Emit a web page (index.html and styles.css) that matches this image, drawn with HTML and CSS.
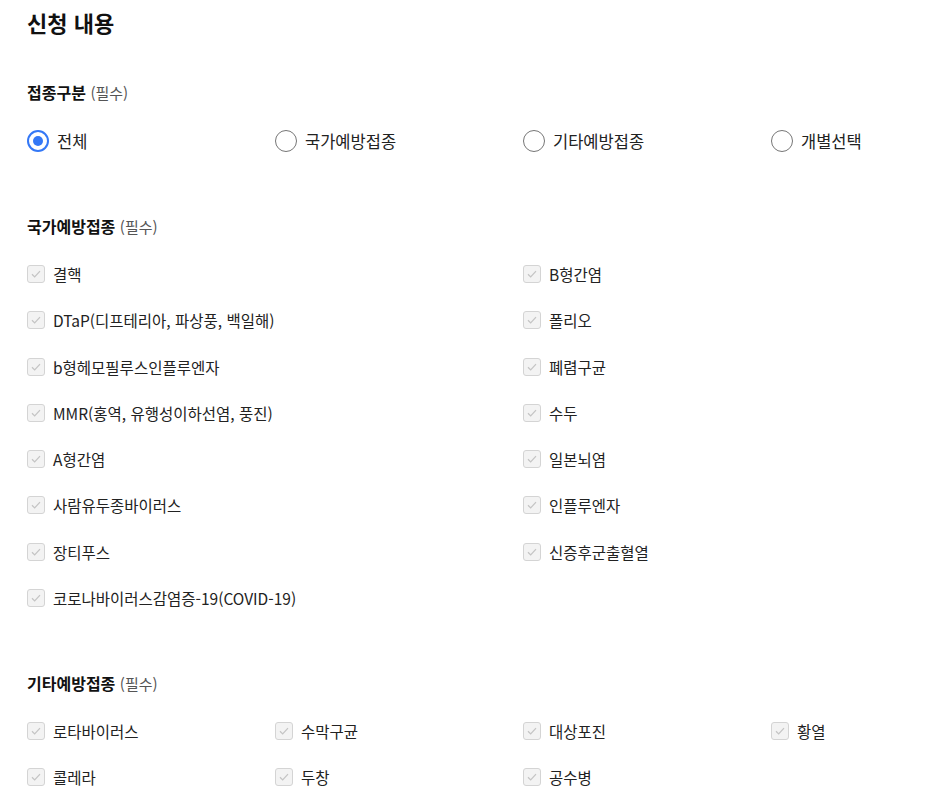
FILE: index.html
```html
<!DOCTYPE html>
<html lang="ko">
<head>
<meta charset="utf-8">
<link rel="stylesheet" href="styles.css">
</head>
<body>
<main class="page">
  <h1 class="title">신청 내용</h1>

  <section class="section first">
    <h2 class="label">접종구분 <span class="req">(필수)</span></h2>
    <div class="grid4">
      <label class="radio"><span class="dot checked"></span>전체</label>
      <label class="radio"><span class="dot"></span>국가예방접종</label>
      <label class="radio"><span class="dot"></span>기타예방접종</label>
      <label class="radio"><span class="dot"></span>개별선택</label>
    </div>
  </section>

  <section class="section">
    <h2 class="label">국가예방접종 <span class="req">(필수)</span></h2>
    <div class="grid2">
      <label class="check"><span class="box"><svg viewBox="0 0 18 18"><path d="M4.5 9.3l3 3 6-6.5"/></svg></span>결핵</label>
      <label class="check"><span class="box"><svg viewBox="0 0 18 18"><path d="M4.5 9.3l3 3 6-6.5"/></svg></span>B형간염</label>
      <label class="check"><span class="box"><svg viewBox="0 0 18 18"><path d="M4.5 9.3l3 3 6-6.5"/></svg></span>DTaP(디프테리아, 파상풍, 백일해)</label>
      <label class="check"><span class="box"><svg viewBox="0 0 18 18"><path d="M4.5 9.3l3 3 6-6.5"/></svg></span>폴리오</label>
      <label class="check"><span class="box"><svg viewBox="0 0 18 18"><path d="M4.5 9.3l3 3 6-6.5"/></svg></span>b형헤모필루스인플루엔자</label>
      <label class="check"><span class="box"><svg viewBox="0 0 18 18"><path d="M4.5 9.3l3 3 6-6.5"/></svg></span>폐렴구균</label>
      <label class="check"><span class="box"><svg viewBox="0 0 18 18"><path d="M4.5 9.3l3 3 6-6.5"/></svg></span>MMR(홍역, 유행성이하선염, 풍진)</label>
      <label class="check"><span class="box"><svg viewBox="0 0 18 18"><path d="M4.5 9.3l3 3 6-6.5"/></svg></span>수두</label>
      <label class="check"><span class="box"><svg viewBox="0 0 18 18"><path d="M4.5 9.3l3 3 6-6.5"/></svg></span>A형간염</label>
      <label class="check"><span class="box"><svg viewBox="0 0 18 18"><path d="M4.5 9.3l3 3 6-6.5"/></svg></span>일본뇌염</label>
      <label class="check"><span class="box"><svg viewBox="0 0 18 18"><path d="M4.5 9.3l3 3 6-6.5"/></svg></span>사람유두종바이러스</label>
      <label class="check"><span class="box"><svg viewBox="0 0 18 18"><path d="M4.5 9.3l3 3 6-6.5"/></svg></span>인플루엔자</label>
      <label class="check"><span class="box"><svg viewBox="0 0 18 18"><path d="M4.5 9.3l3 3 6-6.5"/></svg></span>장티푸스</label>
      <label class="check"><span class="box"><svg viewBox="0 0 18 18"><path d="M4.5 9.3l3 3 6-6.5"/></svg></span>신증후군출혈열</label>
      <label class="check"><span class="box"><svg viewBox="0 0 18 18"><path d="M4.5 9.3l3 3 6-6.5"/></svg></span>코로나바이러스감염증-19(COVID-19)</label>
    </div>
  </section>

  <section class="section">
    <h2 class="label">기타예방접종 <span class="req">(필수)</span></h2>
    <div class="grid4 checks">
      <label class="check"><span class="box"><svg viewBox="0 0 18 18"><path d="M4.5 9.3l3 3 6-6.5"/></svg></span>로타바이러스</label>
      <label class="check"><span class="box"><svg viewBox="0 0 18 18"><path d="M4.5 9.3l3 3 6-6.5"/></svg></span>수막구균</label>
      <label class="check"><span class="box"><svg viewBox="0 0 18 18"><path d="M4.5 9.3l3 3 6-6.5"/></svg></span>대상포진</label>
      <label class="check"><span class="box"><svg viewBox="0 0 18 18"><path d="M4.5 9.3l3 3 6-6.5"/></svg></span>황열</label>
      <label class="check"><span class="box"><svg viewBox="0 0 18 18"><path d="M4.5 9.3l3 3 6-6.5"/></svg></span>콜레라</label>
      <label class="check"><span class="box"><svg viewBox="0 0 18 18"><path d="M4.5 9.3l3 3 6-6.5"/></svg></span>두창</label>
      <label class="check"><span class="box"><svg viewBox="0 0 18 18"><path d="M4.5 9.3l3 3 6-6.5"/></svg></span>공수병</label>
    </div>
  </section>
</main>
</body>
</html>
```

FILE: styles.css
```css
html, body {
  margin: 0;
  padding: 0;
  background: #fff;
  overflow: hidden;
}
body {
  font-family: "Noto Sans CJK KR", "Noto Sans", sans-serif;
  color: #222;
}
.page {
  padding: 7px 0 0 27px;
}
.title {
  margin: 0;
  font-size: 22px;
  line-height: 30px;
  font-weight: 700;
  color: #111;
}
.section {
  margin-top: 63px;
}
.section.first {
  margin-top: 44px;
}
.label {
  margin: 0 0 25px;
  font-size: 16px;
  line-height: 22px;
  font-weight: 700;
  color: #111;
}
.req {
  font-size: 15px;
  font-weight: 400;
  color: #555;
}
.first .label {
  margin-bottom: 26px;
}
.grid4 {
  display: grid;
  grid-template-columns: 248px 248px 248px 1fr;
}
.grid2 {
  display: grid;
  grid-template-columns: 496px 1fr;
  row-gap: 24.3px;
}
.grid4.checks {
  row-gap: 24px;
}
.radio, .check {
  display: flex;
  align-items: center;
  height: 22px;
  font-size: 15.5px;
  line-height: 22px;
  color: #222;
  white-space: nowrap;
}
.radio {
  font-size: 16.5px;
}
.dot {
  box-sizing: border-box;
  width: 22px;
  height: 22px;
  border-radius: 50%;
  border: 1px solid #767676;
  margin-right: 8px;
  flex: none;
  display: flex;
  align-items: center;
  justify-content: center;
}
.dot.checked {
  border: 2px solid #3478f6;
}
.dot.checked::after {
  content: "";
  width: 10px;
  height: 10px;
  border-radius: 50%;
  background: #3478f6;
}
.box {
  box-sizing: border-box;
  width: 18px;
  height: 18px;
  border: 1px solid #d4d4d4;
  border-radius: 3px;
  background: #f3f3f3;
  margin-right: 8px;
  flex: none;
  display: flex;
}
.box svg {
  width: 16px;
  height: 16px;
  fill: none;
  stroke: #c4c4c4;
  stroke-width: 1.4;
}
```
